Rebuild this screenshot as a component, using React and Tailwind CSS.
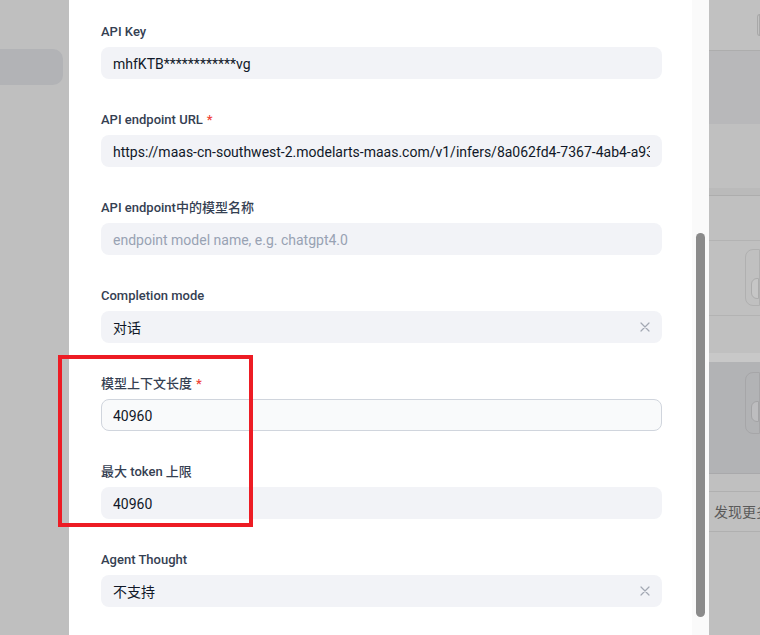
import React from "react";

const fields = [
  { label: "API Key", value: "mhfKTB************vg" },
  { label: "API endpoint URL", required: true, value: "https://maas-cn-southwest-2.modelarts-maas.com/v1/infers/8a062fd4-7367-4ab4-a93c-2f1e9b7d40a6/v1" },
  { label: "API endpoint中的模型名称", placeholder: "endpoint model name, e.g. chatgpt4.0" },
  { label: "Completion mode", value: "对话", clearable: true },
  { label: "模型上下文长度", required: true, value: "40960", focused: true },
  { label: "最大 token 上限", value: "40960" },
  { label: "Agent Thought", value: "不支持", clearable: true },
];

function ClearIcon() {
  return (
    <svg width="10" height="10" viewBox="0 0 10 10" className="shrink-0">
      <path d="M1 1L9 9M9 1L1 9" stroke="#a3a8b3" strokeWidth="1.2" strokeLinecap="round" />
    </svg>
  );
}

function Field({ label, required, value, placeholder, clearable, focused }) {
  return (
    <div className="mb-[30px]">
      <div className="mb-[6px] flex h-5 items-center pt-[2px] text-[13px] font-medium leading-5 text-[#354052]">
        {label}
        {required && <span className="ml-1 text-[#f04438]">*</span>}
      </div>
      <div
        className={
          focused
            ? "flex h-8 items-center rounded-lg border border-[#d0d5dd] bg-[#f9fafb] px-[11px]"
            : "flex h-8 items-center rounded-lg bg-[#f2f3f7] px-3"
        }
      >
        <div className="min-w-0 flex-1 overflow-hidden whitespace-nowrap pt-[2px] text-sm">
          {value ? (
            <span className="text-[#101828]">{value}</span>
          ) : (
            <span className="text-[#98a2b3]">{placeholder}</span>
          )}
        </div>
        {clearable && <ClearIcon />}
      </div>
    </div>
  );
}

function Backdrop() {
  return (
    <div className="flex min-w-0 flex-1 flex-col bg-[#bfbfbf] text-sm text-[#5a5a5a]">
      <div className="flex h-[51px] items-center border-b border-[#adadad] bg-[#c1c1c1] pl-[48px]">
        <div className="h-[22px] w-10 rounded-l-md border border-[#a8a8a8]" />
      </div>
      <div className="h-[73px] bg-[#b8b8ba]" />
      <div className="h-[64px] bg-[#c0c0c0]" />
      <div className="h-[8px] border-b border-[#adadad] bg-[#bababa]" />
      <div className="h-[45px] border-b border-[#b3b3b3] bg-[#c0c0c0]" />
      <div className="h-[75px] border-b border-[#b3b3b3] bg-[#c0c0c0] pl-[36px] pt-[8px]">
        <div className="h-[57px] rounded-l-lg border border-[#b0b0b0] pl-[5px] pt-[28px]">
          <div className="h-[21px] rounded-l-md border border-[#acacac] bg-[#c6c6c6]" />
        </div>
      </div>
      <div className="h-[37px] bg-[#c0c0c0]" />
      <div className="h-[9px] bg-[#c8c8c8]" />
      <div className="h-[112px] border-b border-[#a9a9ab] bg-[#b2b3b5] pl-[36px] pt-[10px]">
        <div className="h-[62px] rounded-l-lg border border-[#a6a6a8] pl-[5px] pt-[28px]">
          <div className="h-[21px] rounded-l-md border border-[#a4a4a6] bg-[#bdbdbf]" />
        </div>
      </div>
      <div className="h-[18px] border-b border-[#b0b0b0] bg-[#c0c0c0]" />
      <div className="flex h-[40px] items-center whitespace-nowrap border-b border-[#b0b0b0] bg-[#c0c0c0] pl-[5px]">
        发现更多
      </div>
      <div className="flex-1 bg-[#bfbfbf]" />
    </div>
  );
}

export default function App() {
  return (
    <div
      className="relative flex h-[635px] w-[760px] overflow-hidden bg-[#bfbfbf]"
      style={{ fontFamily: 'Roboto, "Noto Sans CJK SC", sans-serif' }}
    >
      <div className="w-[69px] shrink-0 pt-[49px]">
        <div className="h-9 w-[63px] rounded-r-[10px] bg-[#b2b3b6]" />
      </div>

      <div className="flex w-[640px] shrink-0 bg-white">
        <div className="w-[623px] pl-8 pr-[30px] pt-[21px]">
          {fields.map((f) => (
            <Field key={f.label} {...f} />
          ))}
        </div>
        <div className="flex w-[17px] justify-center bg-[#fafafa] pt-[233px]">
          <div className="h-[384px] w-[9px] rounded-full bg-[#8b8b8b]" />
        </div>
      </div>

      <Backdrop />

      <div className="absolute left-[58px] top-[355px] h-[172px] w-[195px] border-4 border-[#ed1c24]" />
    </div>
  );
}
